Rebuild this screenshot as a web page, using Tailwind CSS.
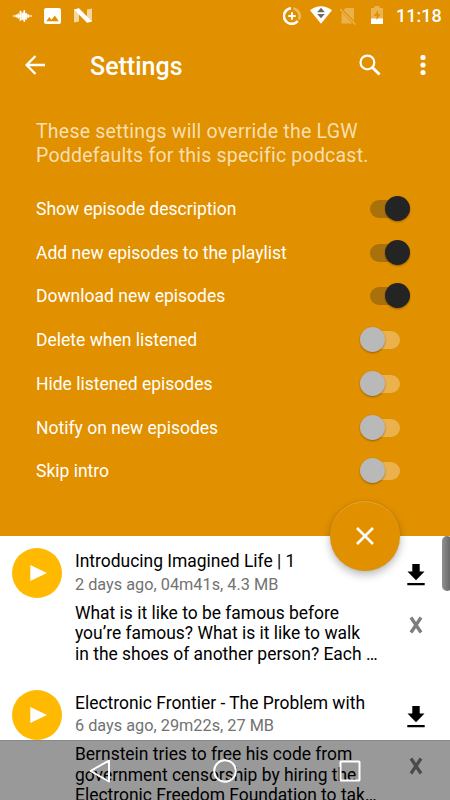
<!DOCTYPE html>
<html lang="en">
<head>
<meta charset="utf-8">
<title>Settings</title>
<script src="https://cdn.jsdelivr.net/npm/@tailwindcss/browser@4"></script>
</head>
<body class="relative w-[450px] h-[800px] overflow-hidden bg-white font-[Roboto,sans-serif] text-black">
<svg class="hidden">
  <symbol id="download" viewBox="0 0 18 22"><path d="M5.3 0h7.4v7.5H17.5L9 16.3.5 7.5H5.3zM.3 19h17.4v2.2H.3z" fill="#000"/></symbol>
  <symbol id="remove" viewBox="0 0 14 18"><path d="M2 1.5L12 16.5M12 1.5L2 16.5" stroke="#7d7d7d" stroke-width="3.3" fill="none"/></symbol>
  <symbol id="play" viewBox="0 0 50 50"><circle cx="25" cy="25" r="25" fill="#ffb900"/><path d="M18.3 17v16L35 25z" fill="#fff"/></symbol>
</svg>

<header class="relative h-[536px] bg-[#e19000] text-white">
  <div class="flex h-[31px] items-center pl-[13px] pr-[10px]">
    <svg class="w-[19px] h-[16px]" viewBox="0 0 19 16" fill="none" stroke="#fff" stroke-width="1.7"><path d="M0 8h19" stroke-width="1.2"/><path d="M3.5 6.5v3M5.5 5.5v5M7.5 2.700v10M9.5 4.500v7.500M11.3 2.300v11.500M13.2 5v6.500M15.3 6.300v3.500"/></svg>
    <svg class="ml-[12px] w-[17px] h-[16px]" viewBox="0 0 17 16"><rect width="17" height="16" rx="2" fill="#fff"/><path d="M2.3 13.2L5.3 9l2.2 2.7L10.8 7.5l4 5.7z" fill="#e19000"/></svg>
    <svg class="ml-[13px] w-[18px] h-[15px]" viewBox="0 0 18 15"><path d="M0 1.500L5 .5v13L0 14.500zM13 1.500L18 .5v13L13 14.500z" fill="#f4d79c"/><path d="M0 1.500L5 .3 18 13.500 13 14.700z" fill="#fff"/></svg>
    <svg class="ml-auto w-[18px] h-[18px]" viewBox="0 0 18 18" fill="none"><path d="M10.500 1.400A7.700 7.700 0 0 1 15.700 12.600" stroke="#eebb60" stroke-width="2.600"/><path d="M8 1.300A7.800 7.800 0 1 0 14.800 14" stroke="#fff" stroke-width="2.600"/><path d="M9 5.300v7.400M5.300 9h7.400" stroke="#fff" stroke-width="2"/></svg>
    <svg class="ml-[9px] mb-[2px] w-[22px] h-[18px]" viewBox="0 0 22 18"><path d="M0 4.300Q11-3.600 22 4.300L11 17.800z" fill="#fff"/><path d="M11 1.800l3.800 4.400H7.200zM11 12.200L7.200 8h7.600z" fill="#6d675e"/></svg>
    <svg class="ml-[8px] w-[16px] h-[18px]" viewBox="0 0 16 18"><path d="M5.500 1H14v12.500L3.500 3zM1.500 5L12.500 16.500H1.500z" fill="#eab14c"/><path d="M0 2L15.500 17.500" stroke="#eab14c" stroke-width="1.500"/></svg>
    <svg class="ml-[15px] mb-px w-[12px] h-[18px]" viewBox="0 0 12 18"><path d="M3.500 0h5v2H12v11H0V2h3.500z" fill="#ebb352"/><path d="M0 12.500h12V18H0z" fill="#fff"/><path d="M7 4L2.800 10h2.700v4L9.500 8H7z" fill="#e19000"/></svg>
    <span class="ml-[13px] w-[44px] whitespace-nowrap text-[18px] font-medium leading-5">11:18</span>
  </div>
  <div class="flex h-[70px] items-center pl-[25px] pr-[25px]">
    <svg class="mb-[2px] w-[20px] h-[20px]" viewBox="0 0 20 20" fill="none" stroke="#fff" stroke-width="2.300"><path d="M20 10H2M10.500 1L1.600 10l8.900 9"/></svg>
    <h1 class="ml-[45px] pt-[2px] text-[25px] font-medium leading-8">Settings</h1>
    <svg class="ml-auto mb-[2px] w-[22px] h-[22px]" viewBox="0 0 23 23" fill="none" stroke="#fff"><circle cx="8.800" cy="8.800" r="7.200" stroke-width="2.300"/><path d="M14 14l7.500 7.500" stroke-width="3"/></svg>
    <svg class="ml-[38.500px] mb-[2px] -mr-[0.500px] w-[6px] h-[20px]" viewBox="0 0 6 20" fill="#fff"><circle cx="3" cy="2.500" r="2.600"/><circle cx="3" cy="10" r="2.600"/><circle cx="3" cy="17.500" r="2.600"/></svg>
  </div>
  <p class="pl-[36px] pt-[18.500px] text-[19.500px] leading-[24px] tracking-[0.220px] text-[#f8dfb0]">These settings will override the LGW<br>Poddefaults for this specific podcast.</p>
  <div class="mt-[19.500px] pl-[36px] pr-[40px] text-[17.500px]">
    <div class="flex h-[43.750px] items-center justify-between"><span>Show episode description</span><span class="relative h-[18px] w-[40px] rounded-full bg-[#a9710c]"><i class="absolute right-[0.500px] -top-[4px] size-[25px] rounded-full bg-[#242424] shadow-[0_1px_2px_#0005]"></i></span></div>
    <div class="flex h-[43.750px] items-center justify-between"><span>Add new episodes to the playlist</span><span class="relative h-[18px] w-[40px] rounded-full bg-[#a9710c]"><i class="absolute right-[0.500px] -top-[4px] size-[25px] rounded-full bg-[#242424] shadow-[0_1px_2px_#0005]"></i></span></div>
    <div class="flex h-[43.750px] items-center justify-between"><span>Download new episodes</span><span class="relative h-[18px] w-[40px] rounded-full bg-[#a9710c]"><i class="absolute right-[0.500px] -top-[4px] size-[25px] rounded-full bg-[#242424] shadow-[0_1px_2px_#0005]"></i></span></div>
    <div class="flex h-[43.750px] items-center justify-between pr-[10px]"><span>Delete when listened</span><span class="relative h-[18px] w-[40px] rounded-full bg-[#eab14c]"><i class="absolute left-0 -top-[4px] size-[25px] rounded-full bg-[#b9b9b9] shadow-[0_1px_2px_#0005]"></i></span></div>
    <div class="flex h-[43.750px] items-center justify-between pr-[10px]"><span>Hide listened episodes</span><span class="relative h-[18px] w-[40px] rounded-full bg-[#eab14c]"><i class="absolute left-0 -top-[4px] size-[25px] rounded-full bg-[#b9b9b9] shadow-[0_1px_2px_#0005]"></i></span></div>
    <div class="flex h-[43.750px] items-center justify-between pr-[10px]"><span>Notify on new episodes</span><span class="relative h-[18px] w-[40px] rounded-full bg-[#eab14c]"><i class="absolute left-0 -top-[4px] size-[25px] rounded-full bg-[#b9b9b9] shadow-[0_1px_2px_#0005]"></i></span></div>
    <div class="flex h-[43.750px] items-center justify-between pr-[10px]"><span>Skip intro</span><span class="relative h-[18px] w-[40px] rounded-full bg-[#eab14c]"><i class="absolute left-0 -top-[4px] size-[25px] rounded-full bg-[#b9b9b9] shadow-[0_1px_2px_#0005]"></i></span></div>
  </div>
  <button class="absolute left-[330px] top-[501px] flex size-[70px] items-center justify-center rounded-full bg-[#e19000] shadow-[0_4px_8px_#0004,0_0_2px_#0002,inset_0_1px_0_#fff3]">
    <svg class="size-[18px]" viewBox="0 0 18 18"><path d="M1 1l16 16M17 1L1 17" stroke="#fff" stroke-width="2.500"/></svg>
  </button>
</header>

<main>
  <article class="flex h-[141.500px] pl-[12.400px] pt-[12px]">
    <svg class="size-[50px] shrink-0"><use href="#play"/></svg>
    <div class="ml-[12.600px] w-[320px] whitespace-nowrap pt-[2px] text-[17.450px]">
      <h2 class="leading-[22px]">Introducing Imagined Life | 1</h2>
      <p class="pt-[1.500px] text-[16.300px] leading-[22px] text-[#727272]">2 days ago, 04m41s, 4.3 MB</p>
      <p class="pt-[7px] leading-[20.500px]">What is it like to be famous before<br>you’re famous? What is it like to walk<br>in the shoes of another person? Each …</p>
    </div>
    <div class="ml-[12px] flex w-[18px] flex-col items-center pt-[16px]">
      <svg class="h-[22px] w-[18px]"><use href="#download"/></svg>
      <svg class="mt-[29.500px] h-[18px] w-[14px]"><use href="#remove"/></svg>
    </div>
  </article>
  <article class="flex h-[142px] pl-[12.400px] pt-[12px]">
    <svg class="size-[50px] shrink-0"><use href="#play"/></svg>
    <div class="ml-[12.600px] w-[320px] whitespace-nowrap pt-[2px] text-[17.450px]">
      <h2 class="leading-[22px]">Electronic Frontier - The Problem with</h2>
      <p class="pt-[1.500px] text-[16.300px] leading-[22px] text-[#727272]">6 days ago, 29m22s, 27 MB</p>
      <p class="pt-[7px] leading-[20.500px]">Bernstein tries to free his code from<br>government censorship by hiring the<br>Electronic Freedom Foundation to tak…</p>
    </div>
    <div class="ml-[12px] flex w-[18px] flex-col items-center pt-[16px]">
      <svg class="h-[22px] w-[18px]"><use href="#download"/></svg>
      <svg class="mt-[29.500px] h-[18px] w-[14px]"><use href="#remove"/></svg>
    </div>
  </article>
</main>

<div class="absolute left-[442px] top-[536px] h-[55px] w-[10px] rounded-full bg-linear-to-r from-[#919191] to-[#606060]"></div>

<nav class="absolute inset-x-0 bottom-0 flex h-[60px] items-center justify-between border-t border-black/10 bg-black/40 pl-[89px] pr-[89px]">
  <svg class="h-[24px] w-[22px]" viewBox="0 0 22 24"><path d="M20 1.500v21L1.500 12z" fill="none" stroke="#fff" stroke-width="2" stroke-linejoin="round"/></svg>
  <svg class="size-[24px]" viewBox="0 0 24 24"><circle cx="12" cy="12" r="10.800" fill="none" stroke="#fff" stroke-width="2"/></svg>
  <svg class="size-[22px]" viewBox="0 0 22 22"><rect x="1.500" y="1.500" width="19" height="19" rx=".5" fill="none" stroke="#fff" stroke-width="2"/></svg>
</nav>
</body>
</html>
